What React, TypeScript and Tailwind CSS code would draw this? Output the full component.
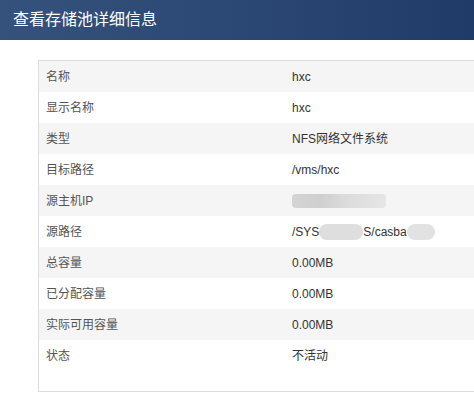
const rows: { label: string; value: React.ReactNode }[] = [
  { label: "名称", value: "hxc" },
  { label: "显示名称", value: "hxc" },
  { label: "类型", value: "NFS网络文件系统" },
  { label: "目标路径", value: "/vms/hxc" },
  {
    label: "源主机IP",
    value: (
      <span className="flex items-center">
        <span className="inline-block h-[14px] w-[94px] rounded-sm bg-[linear-gradient(90deg,#d4d4d4,#cfcfcf_30%,#dcdcdc_60%,#e6e6e6)]" />
      </span>
    ),
  },
  {
    label: "源路径",
    value: (
      <span className="flex items-center">
        <span>/SYS</span>
        <span className="inline-block h-[16px] w-[44px] rounded-full bg-[#dedede]" />
        <span>S/casba</span>
        <span className="inline-block h-[16px] w-[28px] rounded-full bg-[#e2e2e2]" />
      </span>
    ),
  },
  { label: "总容量", value: "0.00MB" },
  { label: "已分配容量", value: "0.00MB" },
  { label: "实际可用容量", value: "0.00MB" },
  { label: "状态", value: "不活动" },
];

export default function App() {
  return (
    <div
      className="w-[474px] h-[395px] overflow-hidden bg-white"
      style={{ fontFamily: '"Liberation Sans", Arial, "Noto Sans CJK SC", sans-serif' }}
    >
      {/* Title bar */}
      <div className="h-[40px] flex items-center pl-[13px] bg-[linear-gradient(90deg,#35527c,#2a4673_55%,#213b68)]">
        <h1 className="text-white text-[16px] leading-none">查看存储池详细信息</h1>
      </div>

      {/* Details panel */}
      <div className="mt-[20px] ml-[38px] w-[460px] h-[332px] border border-[#dddddd] pb-[20px]">
        {rows.map((row, i) => (
          <div
            key={row.label}
            className={`h-[31px] flex items-center text-[12px] ${i % 2 === 0 ? "bg-[#f5f5f5]" : "bg-white"}`}
          >
            <div className="w-[253px] pl-[7px] text-[#555555]">{row.label}</div>
            <div className="flex-1 text-[#333333]">{row.value}</div>
          </div>
        ))}
      </div>
    </div>
  );
}
